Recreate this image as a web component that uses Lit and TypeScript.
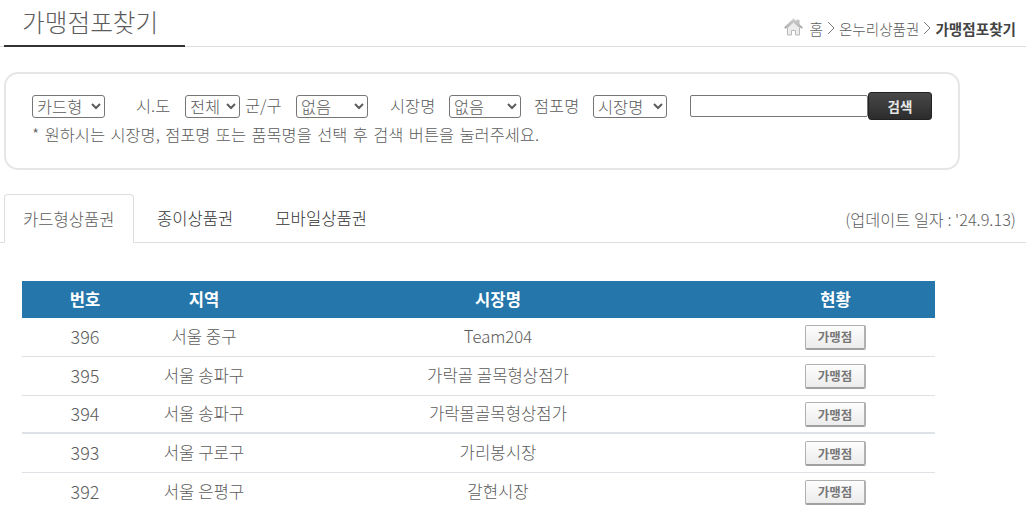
import { LitElement, css, html } from 'lit'
import { customElement, state } from 'lit/decorators.js'

interface Row {
  no: number
  area: string
  market: string
}

@customElement('app-root')
export class AppRoot extends LitElement {

  @state()
  rows: Row[] = [
    { no: 396, area: '서울 중구', market: 'Team204' },
    { no: 395, area: '서울 송파구', market: '가락골 골목형상점가' },
    { no: 394, area: '서울 송파구', market: '가락몰골목형상점가' },
    { no: 393, area: '서울 구로구', market: '가리봉시장' },
    { no: 392, area: '서울 은평구', market: '갈현시장' },
  ]

  private homeIcon() {
    return html`
      <svg class="home" width="19" height="18" viewBox="0 0 19 18">
        <defs>
          <linearGradient id="roof" x1="0" y1="0" x2="0" y2="1">
            <stop offset="0" stop-color="#d8d8d8" />
            <stop offset="1" stop-color="#a6a6a6" />
          </linearGradient>
        </defs>
        <path d="M3.5 9.5V17H7.5v-4.5h4V17h4V9.5L9.5 4z" fill="#ececec" stroke="#b8b8b8" />
        <path d="M.4 9.4 9.5 1l3.2 3V2.2h2.4v4l3.5 3.2-1 1.1L9.5 3.3 1.5 10.6z" fill="url(#roof)" stroke="#a8a8a8" stroke-width=".6" />
      </svg>
    `
  }

  private chevron() {
    return html`
      <svg class="chev" width="8" height="14" viewBox="0 0 8 14">
        <path d="M1 1l6 6-6 6" fill="none" stroke="#777" stroke-width="1" />
      </svg>
    `
  }

  render() {
    return html`
      <header class="head">
        <h1>가맹점포찾기</h1>
        <nav class="crumbs">
          ${this.homeIcon()}
          <span>홈</span>${this.chevron()}<span>온누리상품권</span>${this.chevron()}<b>가맹점포찾기</b>
        </nav>
      </header>

      <section class="search">
        <div class="fields">
          <select class="s-type"><option>카드형</option></select>
          <label class="l-sido">시.도</label>
          <select class="s-sido"><option>전체</option></select>
          <label class="l-gu">군/구</label>
          <select class="s-gu"><option>없음</option></select>
          <label class="l-market">시장명</label>
          <select class="s-market"><option>없음</option></select>
          <label class="l-store">점포명</label>
          <select class="s-store"><option>시장명</option></select>
          <input class="keyword" type="text" />
          <button class="go">검색</button>
        </div>
        <p class="hint">* 원하시는 시장명, 점포명 또는 품목명을 선택 후 검색 버튼을 눌러주세요.</p>
      </section>

      <div class="tabs">
        <a class="tab active">카드형상품권</a>
        <a class="tab">종이상품권</a>
        <a class="tab">모바일상품권</a>
        <span class="updated">(업데이트 일자 : '24.9.13)</span>
      </div>

      <table>
        <colgroup>
          <col style="width:126px" /><col style="width:112px" /><col style="width:476px" /><col style="width:199px" />
        </colgroup>
        <thead>
          <tr><th>번호</th><th>지역</th><th>시장명</th><th>현황</th></tr>
        </thead>
        <tbody>
          ${this.rows.map(row => html`
            <tr>
              <td class="num">${row.no}</td>
              <td>${row.area}</td>
              <td>${row.market}</td>
              <td class="action"><button class="status">가맹점</button></td>
            </tr>
          `)}
        </tbody>
      </table>
    `
  }

  static styles = css`
    :host {
      display: block;
      width: 1026px;
      height: 507px;
      overflow: hidden;
      background: #fff;
      color: #5c5c5c;
      font-family: "Noto Sans CJK KR", "Noto Sans", sans-serif;
      font-weight: 300;
    }

    .head {
      display: flex;
      justify-content: space-between;
      align-items: flex-end;
      height: 47px;
      box-sizing: border-box;
      border-bottom: 1px solid #ddd;
    }
    h1 {
      margin: 0 0 -1px 4px;
      box-sizing: border-box;
      width: 181px;
      height: 47px;
      padding-left: 18px;
      border-bottom: 2px solid #333;
      font-size: 24.7px;
      font-weight: 300;
      line-height: 42px;
      color: #5c5c5c;
    }
    .crumbs {
      display: flex;
      align-items: center;
      height: 36px;
      padding-right: 10px;
      font-size: 14.6px;
    }
    .home {
      margin: -2px 6px 0 0;
    }
    .chev {
      margin: 0 4px;
    }
    .crumbs b {
      font-weight: 700;
      color: #444;
    }

    .search {
      box-sizing: border-box;
      width: 956px;
      height: 98px;
      margin: 25px 0 0 4px;
      padding: 21px 0 0 26px;
      border: 2px solid #e6e6e6;
      border-radius: 14px;
    }
    .fields {
      display: flex;
      align-items: flex-start;
      height: 27px;
      font-size: 16.4px;
    }
    label {
      line-height: 20px;
      white-space: nowrap;
    }
    select {
      box-sizing: border-box;
      height: 23px;
      padding: 0;
      border: 1px solid #767676;
      border-radius: 3px;
      background: #fff;
      color: #5c5c5c;
      font-family: "Liberation Sans", "Noto Sans CJK KR", sans-serif;
      font-size: 16.4px;
      font-weight: 300;
    }
    .s-type { width: 73px; }
    .l-sido { width: 35px; margin-left: 31px; }
    .s-sido { width: 55px; margin-left: 14px; }
    .l-gu { width: 37px; margin-left: 5px; }
    .s-gu { width: 72px; margin-left: 14px; }
    .l-market { width: 45px; margin-left: 22px; }
    .s-market { width: 72px; margin-left: 14px; }
    .l-store { width: 45px; margin-left: 13px; }
    .s-store { width: 74px; margin-left: 14px; }
    .keyword {
      box-sizing: border-box;
      width: 178px;
      height: 22px;
      margin: 0 0 0 23px;
      border: 1px solid #767676;
      border-radius: 2px;
    }
    .go {
      width: 64px;
      height: 28px;
      margin-top: -3px;
      padding: 0;
      border: 1px solid #222;
      border-radius: 3px;
      background: linear-gradient(#484848, #2c2c2c);
      color: #e6e6e6;
      font: inherit;
      font-size: 13.5px;
      font-weight: 700;
    }
    .hint {
      margin: 1px 0 0;
      font-size: 16.4px;
      word-spacing: 1.8px;
      line-height: 22px;
    }

    .tabs {
      display: flex;
      align-items: flex-end;
      height: 49px;
      margin-top: 24px;
      padding-left: 4px;
      box-sizing: border-box;
      border-bottom: 1px solid #ddd;
      font-size: 16.6px;
    }
    .tab {
      box-sizing: border-box;
      height: 48px;
      padding: 0 21px;
      line-height: 48px;
      color: #333;
    }
    .tab.active {
      width: 130px;
      height: 49px;
      margin: 0 2px -1px 0;
      padding: 0 18px;
      border: 1px solid #ddd;
      border-bottom: 1px solid #fff;
      border-radius: 4px 4px 0 0;
      color: #5c5c5c;
    }
    .updated {
      margin-left: auto;
      padding-right: 10px;
      font-size: 16.3px;
      line-height: 46px;
    }

    table {
      width: 913px;
      margin: 38px 0 0 22px;
      border-collapse: separate;
      border-spacing: 0;
      table-layout: fixed;
    }
    th {
      height: 37px;
      padding: 0 0 2px;
      box-sizing: border-box;
      background: #2476ab;
      color: #fff;
      font-size: 16.6px;
      font-weight: 700;
      text-align: center;
    }
    td {
      box-sizing: border-box;
      height: 38.8px;
      padding: 0 0 2px;
      border-bottom: 1px solid #dee2e6;
      font-size: 16.7px;
      text-align: center;
    }
    td.num {
      font-size: 18px;
    }
    tr:nth-child(3) td {
      padding-bottom: 1px;
      border-bottom-width: 2px;
    }
    td.action,
    tr:nth-child(3) td.action {
      padding: 6.8px 0 0;
      vertical-align: top;
    }
    .status {
      display: block;
      width: 61px;
      height: 25px;
      margin: 0 auto;
      padding: 0;
      border: 1px solid #b0b0b0;
      border-bottom: 2px solid #a0a0a0;
      border-right: 2px solid #b0b0b0;
      border-radius: 2px;
      background: linear-gradient(#fdfdfd, #ececec);
      color: #777;
      font: inherit;
      font-size: 12.5px;
      font-weight: 700;
    }
  `
}

declare global {
  interface HTMLElementTagNameMap {
    'app-root': AppRoot
  }
}
